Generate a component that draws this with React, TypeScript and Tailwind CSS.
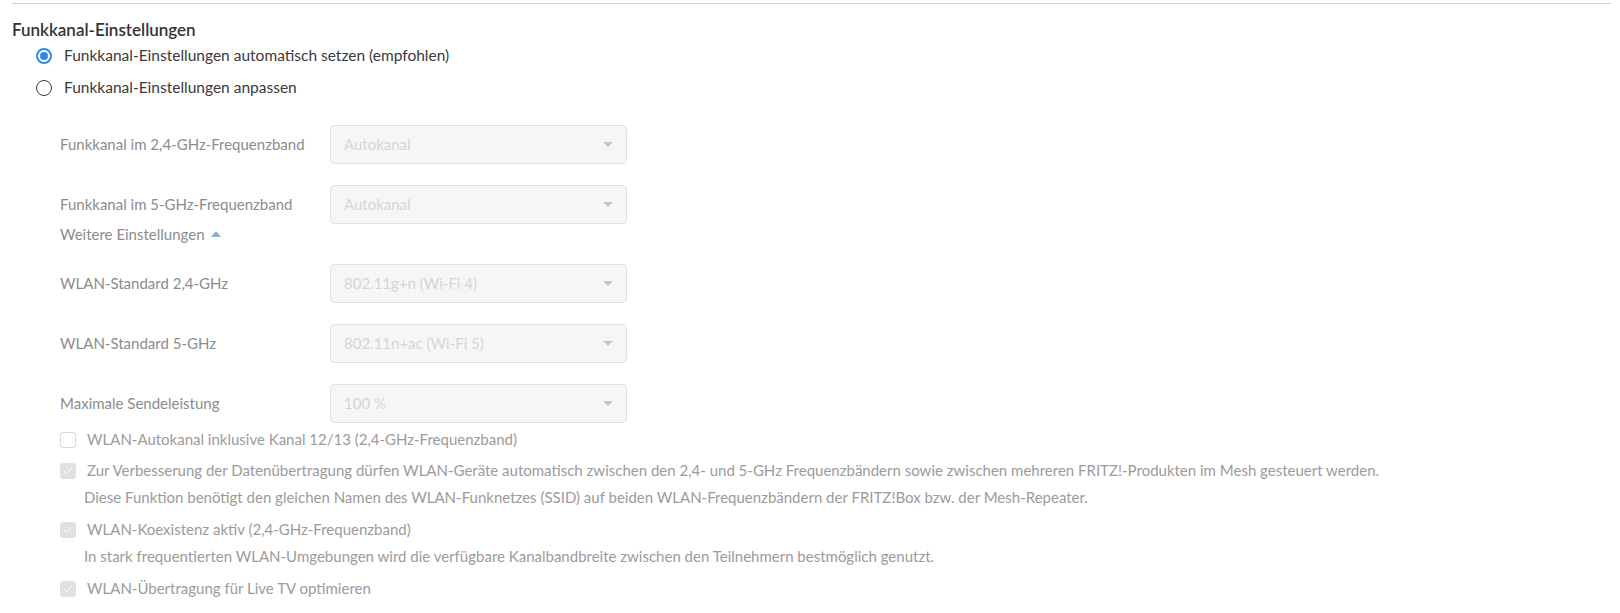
import { Check } from 'lucide-react';

const font = "font-['Lato','Liberation_Sans',sans-serif]";

const SelectBox = ({ value }: { value: string }) => (
    <div className="flex items-center justify-between w-[297px] h-[39px] pl-[13px] pr-[13px] rounded-[4px] border border-[#e2e2e2] bg-[#f6f6f6]">
        <span className="text-[15px] text-[#d5d5d5]">{value}</span>
        <span className="w-0 h-0 border-l-[5px] border-r-[5px] border-t-[5px] border-l-transparent border-r-transparent border-t-[#c6c6c6]" />
    </div>
);

const SelectRow = ({ label, value }: { label: string; value: string }) => (
    <div className="flex items-center pl-12">
        <span className="w-[270px] text-[15px] text-[#8c8c8c]">{label}</span>
        <SelectBox value={value} />
    </div>
);

const Radio = ({ checked, label }: { checked?: boolean; label: string }) => (
    <div className="flex items-center h-8 pl-6 gap-3">
        {checked ? (
            <span className="flex items-center justify-center w-4 h-4 rounded-full border-2 border-[#2d89e3]">
                <span className="w-2 h-2 rounded-full bg-[#2d89e3]" />
            </span>
        ) : (
            <span className="w-4 h-4 rounded-full border-[1.5px] border-[#3a3a3a]" />
        )}
        <span className="text-[15.5px] text-[#3a3a3a]">{label}</span>
    </div>
);

const CheckRow = ({ checked, label }: { checked?: boolean; label: string }) => (
    <div className="flex items-center h-[31px] pl-12 gap-[11px]">
        {checked ? (
            <span className="flex items-center justify-center w-4 h-4 rounded-[3px] bg-[#e1e1e1]">
                <Check size={12} strokeWidth={2} className="text-white" />
            </span>
        ) : (
            <span className="w-4 h-4 rounded-[3px] border border-[#d9d9d9] bg-white" />
        )}
        <span className="text-[15px] text-[#9b9b9b]">{label}</span>
    </div>
);

const Hint = ({ text }: { text: string }) => (
    <div className="flex items-center h-[22px] mb-[6px] pl-[72px] text-[15px] text-[#9b9b9b]">{text}</div>
);

export default function App() {
    return (
        <div className={`w-[1620px] h-[613px] bg-white overflow-hidden ${font}`}>
            <div className="ml-3 mr-[9px] mt-[3px] border-t border-[#d3d3d3]">
                <h2 className="mt-4 h-5 leading-5 text-[17px] font-semibold text-[#333]">Funkkanal-Einstellungen</h2>
                <Radio checked label="Funkkanal-Einstellungen automatisch setzen (empfohlen)" />
                <Radio label="Funkkanal-Einstellungen anpassen" />

                <div className="mt-[21px] flex flex-col gap-[21px]">
                    <SelectRow label="Funkkanal im 2,4-GHz-Frequenzband" value="Autokanal" />
                    <SelectRow label="Funkkanal im 5-GHz-Frequenzband" value="Autokanal" />
                </div>
                <div className="flex items-center h-5 pl-12 gap-[6px] text-[15px] text-[#8c8c8c]">
                    <span>Weitere Einstellungen</span>
                    <span className="w-0 h-0 border-l-[5px] border-r-[5px] border-b-[6px] border-l-transparent border-r-transparent border-b-[#93acd4]" />
                </div>
                <div className="mt-5 flex flex-col gap-[21px]">
                    <SelectRow label="WLAN-Standard 2,4-GHz" value="802.11g+n (Wi-Fi 4)" />
                    <SelectRow label="WLAN-Standard 5-GHz" value="802.11n+ac (Wi-Fi 5)" />
                    <SelectRow label="Maximale Sendeleistung" value="100 %" />
                </div>

                <div className="mt-px">
                    <CheckRow label="WLAN-Autokanal inklusive Kanal 12/13 (2,4-GHz-Frequenzband)" />
                    <CheckRow checked label="Zur Verbesserung der Datenübertragung dürfen WLAN-Geräte automatisch zwischen den 2,4- und 5-GHz Frequenzbändern sowie zwischen mehreren FRITZ!-Produkten im Mesh gesteuert werden." />
                    <Hint text="Diese Funktion benötigt den gleichen Namen des WLAN-Funknetzes (SSID) auf beiden WLAN-Frequenzbändern der FRITZ!Box bzw. der Mesh-Repeater." />
                    <CheckRow checked label="WLAN-Koexistenz aktiv (2,4-GHz-Frequenzband)" />
                    <Hint text="In stark frequentierten WLAN-Umgebungen wird die verfügbare Kanalbandbreite zwischen den Teilnehmern bestmöglich genutzt." />
                    <CheckRow checked label="WLAN-Übertragung für Live TV optimieren" />
                </div>
            </div>
        </div>
    );
}
